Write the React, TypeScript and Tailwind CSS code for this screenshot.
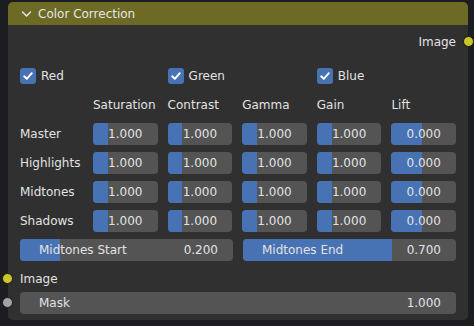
import type { ReactNode } from "react";

const rows = [
  { name: "Master", values: ["1.000", "1.000", "1.000", "1.000", "0.000"] },
  { name: "Highlights", values: ["1.000", "1.000", "1.000", "1.000", "0.000"] },
  { name: "Midtones", values: ["1.000", "1.000", "1.000", "1.000", "0.000"] },
  { name: "Shadows", values: ["1.000", "1.000", "1.000", "1.000", "0.000"] },
];

const columns = ["Saturation", "Contrast", "Gamma", "Gain", "Lift"];

function Socket({ grey, className }: { grey?: boolean; className: string }) {
  return (
    <div
      className={`absolute w-[11px] h-[11px] rounded-full border border-[#1a1a1a] ${
        grey ? "bg-[#a3a3a3]" : "bg-[#c9c82b]"
      } ${className}`}
    />
  );
}

function Check({ label }: { label: string }) {
  return (
    <div className="flex items-center gap-[5px] h-[22px]">
      <div className="w-[16px] h-[16px] rounded-[3px] bg-[#4772b3] flex items-center justify-center">
        <svg width="12" height="12" viewBox="0 0 12 12">
          <path
            d="M2.2 6.3 L4.8 8.8 L9.8 3.2"
            fill="none"
            stroke="#ffffff"
            strokeWidth="1.9"
            strokeLinecap="round"
            strokeLinejoin="round"
          />
        </svg>
      </div>
      <span>{label}</span>
    </div>
  );
}

// number field with the blue fill coming from the left
function Field({
  fill,
  children,
  className = "",
}: {
  fill: string;
  children: ReactNode;
  className?: string;
}) {
  return (
    <div
      className={`relative h-[22px] rounded-[4px] bg-[#545454] overflow-hidden ${className}`}
    >
      <div className={`absolute left-0 top-0 bottom-0 bg-[#4772b3] ${fill}`} />
      <div className="relative h-full flex items-center">{children}</div>
    </div>
  );
}

export default function App() {
  return (
    <div
      className="w-[474px] h-[326px] bg-[#1c1d21] overflow-hidden pl-[8px] pt-[2px] text-[12px] text-[#e2e2e2]"
      style={{ fontFamily: "'DejaVu Sans', sans-serif" }}
    >
      <div className="relative w-[460px] h-[318px] rounded-[5px] bg-[#303030] flex flex-col">
        {/* header */}
        <div className="h-[23px] rounded-t-[5px] bg-[#6c6a25] flex items-center pl-[13px] gap-[6px]">
          <svg width="11" height="8" viewBox="0 0 11 8">
            <path
              d="M1.5 2 L5.5 6 L9.5 2"
              fill="none"
              stroke="#e6e6e6"
              strokeWidth="1.5"
              strokeLinecap="round"
              strokeLinejoin="round"
            />
          </svg>
          <span className="text-[#e6e6e6]">Color Correction</span>
        </div>

        <div className="flex flex-col px-[12px] pb-[6px]">
          {/* output */}
          <div className="relative mt-[6px] h-[22px] flex items-center justify-end">
            <span>Image</span>
            <Socket className="right-[-18px] top-[5px]" />
          </div>

          <div className="grid grid-cols-[63px_repeat(5,1fr)] gap-x-[10px]">
            {/* channel toggles */}
            <div className="col-span-2 mt-[12px]">
              <Check label="Red" />
            </div>
            <div className="col-span-2 mt-[12px]">
              <Check label="Green" />
            </div>
            <div className="col-span-2 mt-[12px]">
              <Check label="Blue" />
            </div>

            {/* column titles */}
            <div className="mt-[7px] h-[22px]" />
            {columns.map((c) => (
              <div key={c} className="mt-[7px] h-[22px] flex items-center">
                {c}
              </div>
            ))}

            {rows.map((r) => (
              <div key={r.name} className="contents">
                <div className="mt-[7px] h-[22px] flex items-center">{r.name}</div>
                {r.values.map((v, i) => (
                  <Field
                    key={i}
                    fill={i === 4 ? "w-[48%]" : "w-[23%]"}
                    className="mt-[7px]"
                  >
                    <span className="w-full text-center">{v}</span>
                  </Field>
                ))}
              </div>
            ))}
          </div>

          {/* midtones range */}
          <div className="mt-[7px] grid grid-cols-2 gap-x-[10px]">
            <Field fill="w-[19%]">
              <div className="w-full flex justify-between pl-[19px] pr-[15px]">
                <span>Midtones Start</span>
                <span>0.200</span>
              </div>
            </Field>
            <Field fill="w-[70%]">
              <div className="w-full flex justify-between pl-[19px] pr-[15px]">
                <span>Midtones End</span>
                <span>0.700</span>
              </div>
            </Field>
          </div>

          {/* inputs */}
          <div className="relative mt-[7px] h-[22px] flex items-center">
            <span>Image</span>
            <Socket className="left-[-18px] top-[5px]" />
          </div>
          <div className="relative mt-[2px]">
            <Field fill="w-0">
              <div className="w-full flex justify-between pl-[19px] pr-[15px]">
                <span>Mask</span>
                <span>1.000</span>
              </div>
            </Field>
            <Socket grey className="left-[-18px] top-[5px]" />
          </div>
        </div>
      </div>
    </div>
  );
}
